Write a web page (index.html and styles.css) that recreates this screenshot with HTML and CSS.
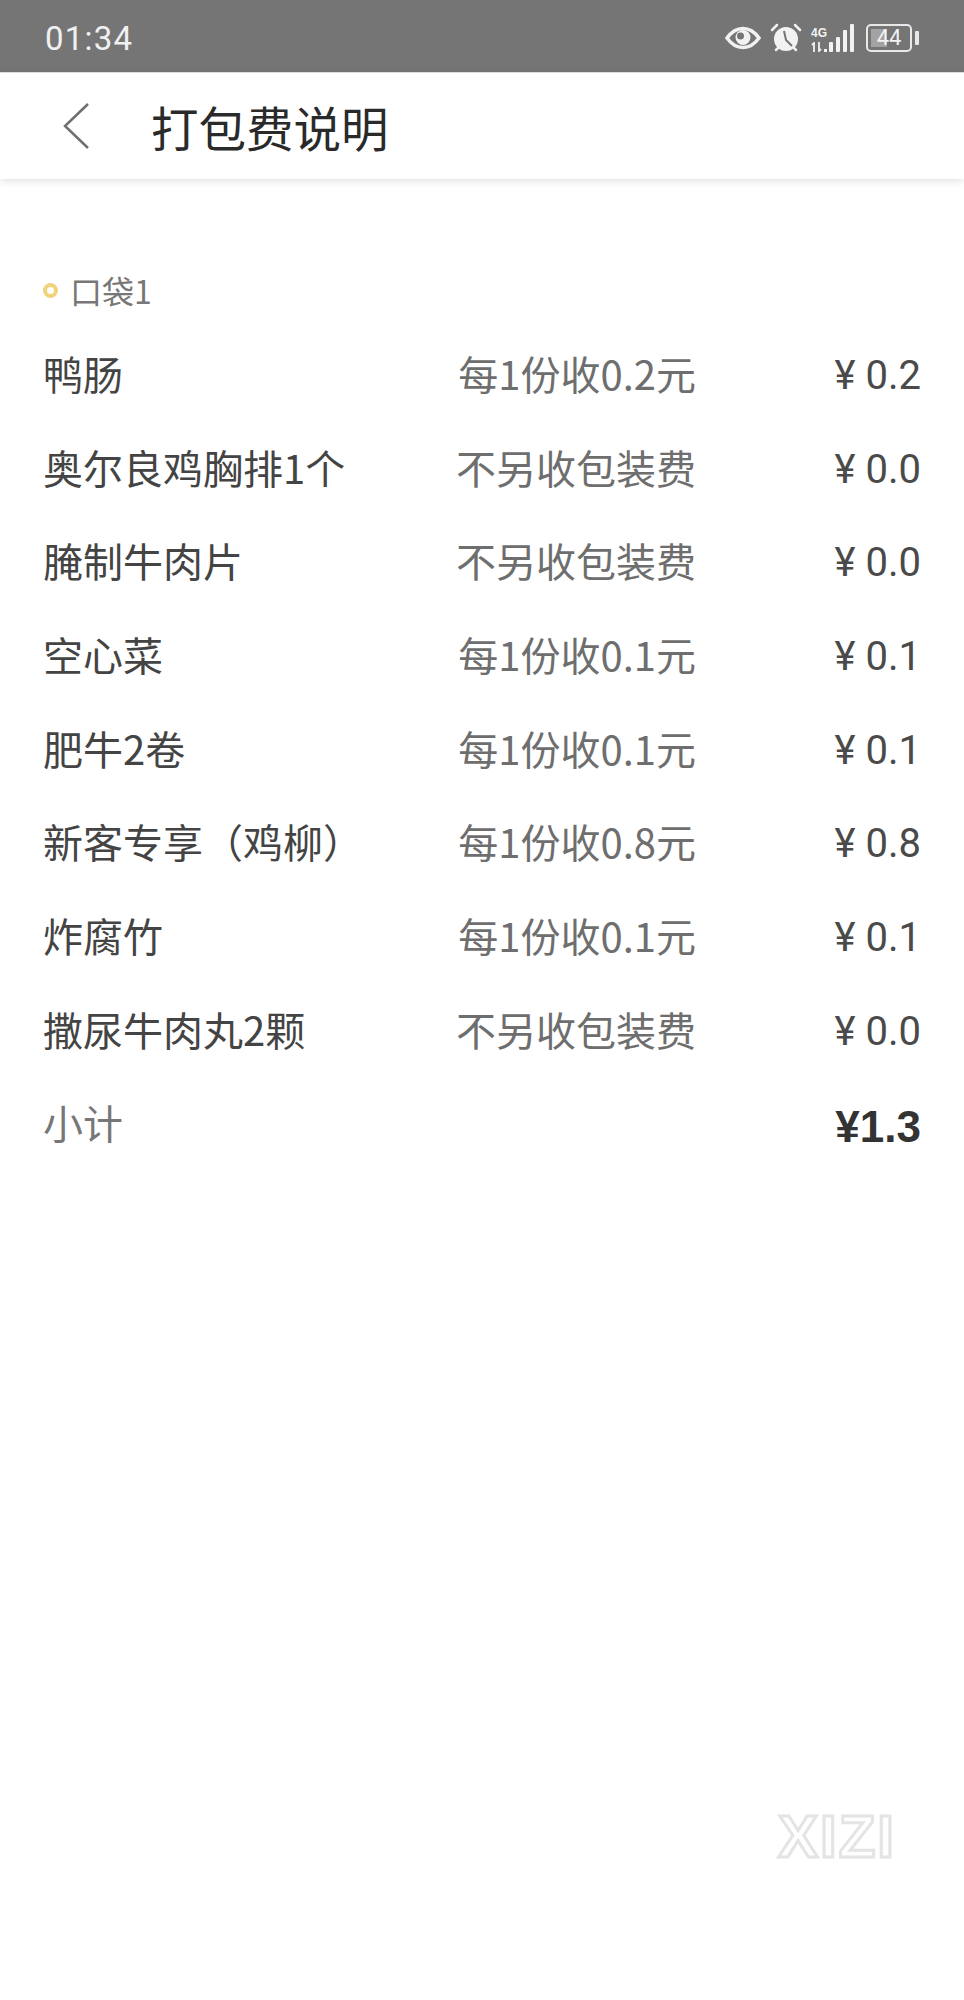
FILE: index.html
```html
<!DOCTYPE html>
<html lang="zh-CN">
  <head>
    <meta charset="UTF-8" />
    <meta name="viewport" content="width=device-width, initial-scale=1.0" />
    <title>打包费说明</title>
    <link rel="stylesheet" href="styles.css">
  </head>
  <body>
    <div class="status-bar">
      <span class="time">01:34</span>
      <div class="status-icons">
        <svg class="icon-eye" width="36" height="24" viewBox="0 0 36 24">
          <path d="M2 12C7 5 12 2.500 18 2.500S29 5 34 12C29 19 24 21.500 18 21.500S7 19 2 12Z" fill="none" stroke="#f2f2f2" stroke-width="3.500"/>
          <circle cx="18" cy="11.500" r="7.500" fill="#f2f2f2"/>
          <circle cx="15.500" cy="10" r="3.500" fill="#757575"/>
        </svg>
        <svg class="icon-alarm" width="32" height="30" viewBox="0 0 32 30">
          <circle cx="16" cy="16" r="12" fill="#f2f2f2"/>
          <path d="M14 8L16 17L22 23" fill="none" stroke="#757575" stroke-width="2"/>
          <path d="M2 7L7 2M30 7L25 2M6 27L8 25M26 27L24 25" stroke="#f2f2f2" stroke-width="2.500" stroke-linecap="round"/>
        </svg>
        <div class="network">
          <div class="network-labels">
            <span class="net-type">4G</span>
            <svg width="16" height="10" viewBox="0 0 16 10">
              <path d="M3 10V1L1 3M8 0V9L10 7" fill="none" stroke="#f2f2f2" stroke-width="1.800"/>
              <rect x="13" y="7" width="3" height="3" fill="#f2f2f2"/>
            </svg>
          </div>
          <div class="signal">
            <i class="bar-1"></i><i class="bar-2"></i><i class="bar-3"></i><i class="bar-4"></i>
          </div>
        </div>
        <div class="battery">
          <div class="battery-body">
            <div class="battery-level" style="width: 44%"></div>
            <span class="battery-text">44</span>
          </div>
          <div class="battery-tip"></div>
        </div>
      </div>
    </div>

    <header class="nav">
      <svg class="back" width="28" height="48" viewBox="0 0 28 48">
        <path d="M26 2L3 24L26 46" fill="none" stroke="#6f6f6f" stroke-width="2.500"/>
      </svg>
      <h1 class="nav-title">打包费说明</h1>
    </header>

    <main class="content">
      <div class="bag-title">
        <span class="bag-dot"></span>
        <span>口袋1</span>
      </div>

      <div class="fee-list">
        <div class="fee-row"><span class="name">鸭肠</span><span class="rule">每1份收0.2元</span><span class="price">¥ 0.2</span></div>
        <div class="fee-row"><span class="name">奥尔良鸡胸排1个</span><span class="rule">不另收包装费</span><span class="price">¥ 0.0</span></div>
        <div class="fee-row"><span class="name">腌制牛肉片</span><span class="rule">不另收包装费</span><span class="price">¥ 0.0</span></div>
        <div class="fee-row"><span class="name">空心菜</span><span class="rule">每1份收0.1元</span><span class="price">¥ 0.1</span></div>
        <div class="fee-row"><span class="name">肥牛2卷</span><span class="rule">每1份收0.1元</span><span class="price">¥ 0.1</span></div>
        <div class="fee-row"><span class="name">新客专享（鸡柳）</span><span class="rule">每1份收0.8元</span><span class="price">¥ 0.8</span></div>
        <div class="fee-row"><span class="name">炸腐竹</span><span class="rule">每1份收0.1元</span><span class="price">¥ 0.1</span></div>
        <div class="fee-row"><span class="name">撒尿牛肉丸2颗</span><span class="rule">不另收包装费</span><span class="price">¥ 0.0</span></div>
        <div class="fee-row subtotal"><span class="name">小计</span><span class="rule"></span><span class="price">¥1.3</span></div>
      </div>
    </main>

    <div class="watermark">XIZI</div>
  </body>
</html>
```

FILE: styles.css
```css
* {
  box-sizing: border-box;
}

body {
  margin: 0;
  width: 964px;
  height: 2000px;
  position: relative;
  overflow: hidden;
  background-color: #fff;
  font-family: "Noto Sans CJK SC", "Noto Sans", sans-serif;
}

.status-bar {
  height: 72px;
  background-color: #757575;
  display: flex;
  justify-content: space-between;
  align-items: center;
  padding: 4px 45px 0 45px;
}

.time {
  font-family: Roboto, sans-serif;
  font-size: 33px;
  letter-spacing: 1.200px;
  color: #f0f0f0;
}

.status-icons {
  display: flex;
  align-items: center;
  gap: 9px;
}

.network {
  display: flex;
  align-items: flex-end;
  gap: 2px;
}

.network-labels {
  display: flex;
  flex-direction: column;
  gap: 2px;
}

.net-type {
  font-family: "Liberation Sans", sans-serif;
  font-size: 12px;
  font-weight: bold;
  line-height: 13px;
  color: #f2f2f2;
}

.signal {
  display: flex;
  align-items: flex-end;
  gap: 3px;
}

.signal i {
  display: block;
  width: 4px;
  background-color: #f2f2f2;
  border-radius: 1px;
}

.bar-1 { height: 10px; }
.bar-2 { height: 15px; }
.bar-3 { height: 22px; }
.bar-4 { height: 28px; }

.battery {
  display: flex;
  align-items: center;
  gap: 3px;
  margin-left: 3px;
}

.battery-body {
  width: 46px;
  height: 28px;
  border: 2px solid #e8e8e8;
  border-radius: 5px;
  padding: 3px;
  position: relative;
}

.battery-level {
  height: 100%;
  background-color: #a3a3a3;
}

.battery-text {
  position: absolute;
  left: 0;
  right: 0;
  top: 0;
  text-align: center;
  font-family: Roboto, sans-serif;
  font-size: 22px;
  line-height: 24px;
  color: #f2f2f2;
}

.battery-tip {
  width: 4px;
  height: 14px;
  background-color: #e8e8e8;
  border-radius: 1px;
}

.nav {
  height: 107px;
  background-color: #fff;
  display: flex;
  align-items: center;
  padding-left: 62px;
  border-top: 1px solid #ddd;
  box-shadow: 0 2px 8px rgba(0, 0, 0, 0.12);
}

.nav-title {
  margin: 0 0 0 61px;
  font-size: 47.500px;
  font-weight: 400;
  color: #2a2a2a;
}

.content {
  padding: 91px 43px 0;
}

.bag-title {
  display: flex;
  align-items: center;
  height: 40px;
  font-size: 32px;
  color: #777;
}

.bag-dot {
  width: 15px;
  height: 15px;
  border: 4px solid #f2d27a;
  border-radius: 50%;
  margin-right: 12px;
}

.fee-list {
  margin-top: 16px;
}

.fee-row {
  display: grid;
  grid-template-columns: 1fr 260px 225px;
  align-items: center;
  height: 93.700px;
  font-size: 40px;
}

.name {
  color: #444;
}

.rule {
  text-align: right;
  color: #6e6e6e;
}

.price {
  text-align: right;
  padding-top: 5px;
  font-family: Roboto, sans-serif;
  font-size: 40px;
  color: #4a4a4a;
}

.subtotal .name {
  color: #777;
}

.subtotal .price {
  padding-top: 9px;
  font-family: "Liberation Sans", sans-serif;
  font-size: 44px;
  font-weight: bold;
  color: #333;
}

/* outlined mark in the lower right corner */
.watermark {
  position: absolute;
  left: 778px;
  top: 1809px;
  font-family: "Liberation Sans", sans-serif;
  font-size: 60px;
  font-weight: bold;
  letter-spacing: 2px;
  line-height: 56px;
  color: #fff;
  -webkit-text-stroke: 3px #e4e4e4;
}
```
